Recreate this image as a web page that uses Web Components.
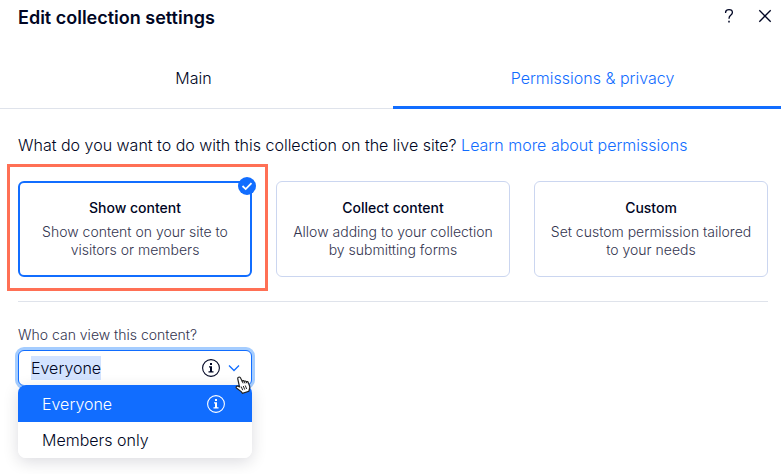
<!DOCTYPE html>
<html lang="en">
<head>
<meta charset="utf-8">
<meta name="viewport" content="width=device-width, initial-scale=1">
<title>Edit collection settings</title>
<style>
  body {
    margin: 0;
    background: #fff;
    color: #000624;
    font-family: Inter, "Liberation Sans", sans-serif;
    font-size: 16px;
    font-weight: 300;
    line-height: 24px;
    --blue: #116dff;
    --muted: #33354f;
    --line: #dfe3eb;
  }
</style>
</head>
<body>
<settings-dialog></settings-dialog>

<template id="settings-dialog">
  <style>
    :host { display: block; overflow: hidden; min-height: 100vh; }
    main { padding: 24px 13px 16px 18px; }
    p { margin: 0 0 24px; }
    a { color: var(--blue); text-decoration: none; }
    hr { margin: 24px 0 22px; border: 0; border-top: 1px solid var(--line); }
  </style>
  <dialog-header>Edit collection settings</dialog-header>
  <tab-bar></tab-bar>
  <main>
    <p>What do you want to do with this collection on the live site? <a href="#permissions">Learn more about permissions</a></p>
    <choice-cards></choice-cards>
    <hr>
    <drop-down>Who can view this content?</drop-down>
  </main>
</template>

<template id="dialog-header">
  <style>
    :host { display: flex; align-items: center; justify-content: space-between; padding: 3px 4px 0 18px; }
    h1 { margin: 0; font-size: 18px; line-height: 30px; font-weight: 600; }
    .actions { display: flex; gap: 12px; margin-top: -4px; }
    button { display: grid; place-items: center; width: 24px; height: 24px; padding: 0; border: 0; background: none; color: inherit; }
  </style>
  <h1><slot></slot></h1>
  <div class="actions">
    <button type="button" aria-label="Help"><svg width="12" height="16" viewBox="0 0 12 16" fill="none" stroke="currentColor" stroke-width="1.3"><path d="M2.6 5V4.3C2.6 2.6 4 1.7 6 1.7s3.4 1 3.4 2.8c0 1.6-1 2.2-2 3C6.400 8.300 6 8.900 6 10.700"/><path d="M6 12.800v1.600" stroke-width="1.500"/></svg></button>
    <button type="button" aria-label="Close"><svg width="14" height="14" viewBox="0 0 14 14" fill="none" stroke="currentColor" stroke-width="1.3"><path d="M1.300 1.300l11.400 11.400M12.700 1.300L1.300 12.700"/></svg></button>
  </div>
</template>

<template id="tab-bar">
  <style>
    :host { display: block; margin: 15px -11px 0 -6px; }
    div { display: grid; grid-template-columns: 1fr 1fr; border-bottom: 1px solid var(--line); }
    button { height: 61px; margin-bottom: -1px; padding: 2px 0 0; border: 0; border-bottom: 3px solid transparent; background: none; color: inherit; font: inherit; }
    button[aria-selected="true"] { color: var(--blue); border-color: var(--blue); }
  </style>
  <div role="tablist">
    <button type="button" role="tab" aria-selected="false">Main</button>
    <button type="button" role="tab" aria-selected="true">Permissions &amp; privacy</button>
  </div>
</template>

<template id="choice-cards">
  <style>
    :host { display: block; }
    fieldset { display: grid; grid-template-columns: repeat(3, 1fr); gap: 24px; margin: 0; padding: 0; border: 0; min-width: 0; }
    label { position: relative; box-sizing: border-box; min-height: 96px; padding: 17px 14px; border: 1px solid #cbd6f0; border-radius: 6px; text-align: center; font-size: 14px; line-height: 18px; color: var(--muted); }
    label:has(input:checked) { padding: 16px 13px; border: 2px solid var(--blue); }
    input { position: absolute; opacity: 0; margin: 0; }
    strong { display: block; margin-bottom: 6px; font-weight: 500; color: #000624; }
    .tick { display: none; position: absolute; top: -6px; right: -6px; }
    input:checked ~ .tick { display: block; }
    .callout { position: absolute; inset: -19px -18px -16px -13px; border: 3px solid #ff7055; pointer-events: none; }
    .text { display: block; }
  </style>
  <fieldset aria-label="Collection permissions">
    <label><input type="radio" name="access" checked><strong>Show content</strong><span class="text">Show content on your site to visitors or members</span>
      <svg class="tick" width="18" height="18" viewBox="0 0 18 18"><circle cx="9" cy="9" r="9" fill="#116dff"/><path d="M4.500 9l3.200 3.100 5.800-6" fill="none" stroke="#fff" stroke-width="1.800"/></svg>
      <span class="callout"></span></label>
    <label><input type="radio" name="access"><strong>Collect content</strong><span class="text">Allow adding to your collection by submitting forms</span></label>
    <label><input type="radio" name="access"><strong>Custom</strong><span class="text">Set custom permission tailored to your needs</span></label>
  </fieldset>
</template>

<template id="info-icon">
  <style>:host { display: block; height: 18px; } svg { display: block; }</style>
  <svg width="18" height="18" viewBox="0 0 18 18" fill="currentColor"><circle cx="9" cy="9" r="8.400" fill="none" stroke="currentColor" stroke-width="1.100"/><rect x="8" y="4" width="2" height="2"/><path d="M7 7.300h3v5h1.500v1.200h-5v-1.200H8V8.500H7z"/></svg>
</template>

<template id="drop-down">
  <style>
    :host { display: grid; grid-template-columns: minmax(0, 1fr) minmax(0, 1fr) minmax(0, 1fr); column-gap: 24px; }
    label { grid-column: 1 / -1; font-size: 14px; line-height: 22px; margin-bottom: 4px; color: var(--muted); }
    .box { position: relative; min-width: 0; }
    .field { display: flex; align-items: center; box-sizing: border-box; height: 36px; padding: 0 9px 0 12px; border: 1px solid var(--blue); border-radius: 6px; box-shadow: 0 0 0 3px #a5cdff; background: #fff; }
    input { field-sizing: content; height: 24px; padding: 0; border: 0; outline: 0; background: #d3e3ff; color: inherit; font: inherit; }
    .field info-icon { margin-left: auto; }
    .toggle { display: grid; place-items: center; width: 16px; height: 24px; margin-left: 6px; padding: 0; border: 0; background: none; color: var(--blue); }
    .menu { position: absolute; inset: 35px 0 auto; border-radius: 8px; box-shadow: 0 4px 16px rgba(0, 6, 36, .14); }
    ul { margin: 0; padding: 0; list-style: none; background: #fff; border-radius: 8px; overflow: hidden; }
    li { display: flex; align-items: center; justify-content: space-between; box-sizing: border-box; height: 36px; padding: 0 27px 0 24px; }
    li[aria-selected="true"] { height: 37px; background: var(--blue); color: #fff; }
    .pointer { position: absolute; top: 26px; right: 1px; }
  </style>
  <label for="viewer"><slot></slot></label>
  <div class="box">
    <div class="field">
      <input id="viewer" role="combobox" aria-expanded="true" aria-controls="options" value="Everyone" readonly>
      <info-icon></info-icon>
      <button class="toggle" type="button" aria-label="Toggle options"><svg width="12" height="8" viewBox="0 0 12 8" fill="none" stroke="currentColor" stroke-width="1.300"><path d="M1 1.500l5 5 5-5"/></svg></button>
    </div>
    <div class="menu">
      <ul id="options" role="listbox" aria-label="Viewers">
        <li role="option" aria-selected="true">Everyone <info-icon></info-icon></li>
        <li role="option" aria-selected="false">Members only</li>
      </ul>
    </div>
    <svg class="pointer" width="17" height="19" viewBox="0 0 17 19"><path d="M4.500 1.200c1-.5 1.800.1 2.200 1l1.500 3c.7-.8 1.700-.6 2 .2.800-.7 1.800-.4 2.100.4.900-.5 1.700-.1 2 .8l1.300 3.400c.3 1 .2 2.200-.2 3.300l-.6 1.900-6.300 2.100-1.300-1.700-4.500-3.400c-1.200-1-.5-2.300.8-2.100l2 .7L3.800 3c-.3-.7 0-1.500.7-1.800z" fill="#fff" stroke="#222" stroke-width="1.200"/><path d="M8.200 5.200l.9 2.100m1.100-1.900l.8 2m1.300-1.600l.6 1.500M7.200 10.500l1.500 3.700m.6-4.200l1.400 3.600m.6-4.100l1.300 3.500" fill="none" stroke="#222"/></svg>
  </div>
</template>

<script>
  for (const name of ["info-icon", "dialog-header", "tab-bar", "choice-cards", "drop-down", "settings-dialog"]) {
    customElements.define(name, class extends HTMLElement {
      constructor() {
        super();
        const template = document.getElementById(name);
        this.attachShadow({ mode: "open" }).append(template.content.cloneNode(true));
      }
    });
  }
</script>
</body>
</html>
